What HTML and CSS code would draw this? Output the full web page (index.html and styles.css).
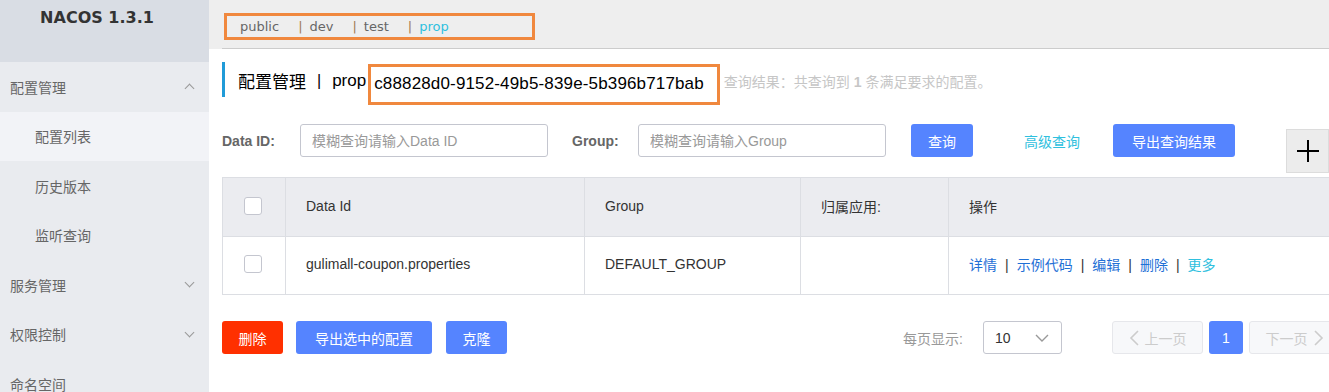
FILE: index.html
```html
<!DOCTYPE html>
<html lang="zh-CN">
<head>
    <meta charset="UTF-8">
    <title>NACOS 1.3.1</title>
    <link rel="stylesheet" href="styles.css">
</head>
<body>

    <aside class="sidebar">
        <div class="brand">NACOS 1.3.1</div>
        <div class="menu-title">配置管理 <span class="arrow up"></span></div>
        <div class="menu-item active">配置列表</div>
        <div class="menu-item">历史版本</div>
        <div class="menu-item">监听查询</div>
        <div class="menu-title">服务管理 <span class="arrow"></span></div>
        <div class="menu-title">权限控制 <span class="arrow"></span></div>
        <div class="menu-title">命名空间</div>
    </aside>

    <main class="content">
        <div class="topbar">
            <div class="topbar-inner">
                <div class="ns-list">
                    <span class="ns">public</span>
                    <span class="ns"><i>|</i>dev</span>
                    <span class="ns"><i>|</i>test</span>
                    <span class="ns current"><i>|</i>prop</span>
                </div>
            </div>
        </div>

        <div class="page">
            <div class="page-title">
                <span class="title-text">配置管理</span>
                <span class="title-sep">|</span>
                <span class="title-text">prop</span>
                <span class="ns-id">c88828d0-9152-49b5-839e-5b396b717bab</span>
                <span class="result">查询结果：共查询到 <b>1</b> 条满足要求的配置。</span>
            </div>

            <div class="search-row">
                <label class="field-label">Data ID:</label>
                <input class="text-input" placeholder="模糊查询请输入Data ID">
                <label class="field-label group-label">Group:</label>
                <input class="text-input" placeholder="模糊查询请输入Group">
                <button class="btn btn-primary search-btn">查询</button>
                <button class="btn btn-link">高级查询</button>
                <button class="btn btn-primary export-btn">导出查询结果</button>
                <button class="add-btn">
                    <svg width="24" height="24" viewBox="0 0 24 24"><path d="M12 1v22M1 12h22" stroke="#000" stroke-width="2"/></svg>
                </button>
            </div>

            <table class="config-table">
                <colgroup>
                    <col style="width: 63px">
                    <col style="width: 299px">
                    <col style="width: 216px">
                    <col style="width: 148px">
                    <col style="width: 400px">
                </colgroup>
                <thead>
                    <tr>
                        <th><span class="checkbox"></span></th>
                        <th>Data Id</th>
                        <th>Group</th>
                        <th>归属应用:</th>
                        <th>操作</th>
                    </tr>
                </thead>
                <tbody>
                    <tr>
                        <td><span class="checkbox"></span></td>
                        <td>gulimall-coupon.properties</td>
                        <td>DEFAULT_GROUP</td>
                        <td></td>
                        <td class="ops">
                            <a>详情</a><i>|</i><a>示例代码</a><i>|</i><a>编辑</a><i>|</i><a>删除</a><i>|</i><a class="more">更多</a>
                        </td>
                    </tr>
                </tbody>
            </table>

            <div class="footer-row">
                <button class="btn btn-danger">删除</button>
                <button class="btn btn-primary export-sel">导出选中的配置</button>
                <button class="btn btn-primary clone-btn">克隆</button>

                <div class="pager">
                    <span class="page-size-label">每页显示:</span>
                    <div class="select">
                        <span>10</span>
                        <svg width="14" height="8" viewBox="0 0 14 8"><path d="M1 1l6 6 6-6" fill="none" stroke="#999" stroke-width="1.4"/></svg>
                    </div>
                    <button class="page-btn disabled prev">
                        <svg width="10" height="16" viewBox="0 0 10 16"><path d="M9 1L2 8l7 7" fill="none" stroke="#ccc" stroke-width="1.6"/></svg>
                        上一页
                    </button>
                    <button class="page-btn current">1</button>
                    <button class="page-btn disabled">
                        下一页
                        <svg width="10" height="16" viewBox="0 0 10 16"><path d="M1 1l7 7-7 7" fill="none" stroke="#ccc" stroke-width="1.6"/></svg>
                    </button>
                </div>
            </div>
        </div>
    </main>

</body>
</html>
```

FILE: styles.css
```css
* {
    margin: 0;
    padding: 0;
    box-sizing: border-box;
}

body {
    font-family: "Liberation Sans", "Noto Sans CJK SC", sans-serif;
    font-size: 14px;
    color: #333;
    display: flex;
    height: 100vh;
    overflow: hidden;
    background-color: #fff;
}

/* sidebar */
.sidebar {
    width: 209px;
    flex-shrink: 0;
    background-color: #e9ebef;
}

.brand {
    height: 62px;
    background-color: #d9dde4;
    text-align: center;
    font-family: "DejaVu Sans", sans-serif;
    font-weight: bold;
    font-size: 16px;
    color: #333;
    padding-top: 8px;
    padding-right: 15px;
}

.menu-title, .menu-item {
    height: 49.5px;
    display: flex;
    align-items: center;
    color: #666;
    font-size: 14px;
}

.menu-title {
    padding-left: 10px;
    justify-content: space-between;
    padding-right: 16px;
}

.menu-item {
    padding-left: 35px;
}

.menu-item.active {
    background-color: #f2f3f7;
}

.arrow {
    width: 7px;
    height: 7px;
    border-right: 1px solid #999;
    border-bottom: 1px solid #999;
    transform: rotate(45deg);
    margin-top: -4px;
}

.arrow.up {
    transform: rotate(-135deg);
    margin-top: 4px;
}

/* main */
.content {
    flex: 1;
    min-width: 0;
    overflow: hidden;
}

.topbar {
    background-color: #eeeeee;
    height: 49px;
}

.topbar-inner {
    margin-left: 13px;
    height: 49px;
    border-bottom: 1px solid #cccccc;
    padding-top: 13px;
    padding-left: 2px;
}

.ns-list {
    display: flex;
    width: 311px;
    height: 27px;
    border: 3px solid #f0883e;
    align-items: center;
    padding-left: 13px;
    padding-bottom: 1px;
    font-family: "DejaVu Sans", "Noto Sans CJK SC", sans-serif;
    font-size: 13px;
    color: #666;
}

.ns {
    margin-right: 19px;
}

.ns i {
    font-style: normal;
    color: #a07a52;
    margin-right: 7px;
}

.ns.current {
    color: #2fc0de;
}

.page {
    padding-left: 13px;
}

.page-title {
    margin-top: 13px;
    height: 35px;
    display: flex;
    align-items: center;
    border-left: 3px solid #209bd8;
    padding-left: 13px;
    padding-top: 2px;
    font-size: 17px;
    color: #000;
    white-space: nowrap;
}

.title-sep {
    margin: 0 11px;
    font-size: 16px;
}

.ns-id {
    margin: 7px 0 0 2px;
    border: 3px solid #f0883e;
    height: 41px;
    padding: 0 13px 0 3px;
    display: flex;
    align-items: center;
    font-size: 17px;
    letter-spacing: 0.15px;
    flex-shrink: 0;
}

.result {
    margin-left: 4px;
    margin-top: 1px;
    font-size: 14px;
    color: #c6c6c6;
}

.result b {
    font-weight: bold;
}

.search-row {
    display: flex;
    align-items: center;
    margin-top: 27px;
    height: 33px;
    white-space: nowrap;
}

.search-row > * {
    flex-shrink: 0;
}

.field-label {
    font-weight: bold;
    color: #666;
    width: 78px;
}

.group-label {
    margin-left: 24px;
    width: 66px;
}

.text-input {
    width: 248px;
    height: 33px;
    border: 1px solid #c4c6cf;
    border-radius: 3px;
    padding-left: 11px;
    font-family: inherit;
    font-size: 14px;
}

.text-input::placeholder {
    color: #999;
}

.btn {
    height: 33px;
    border: none;
    border-radius: 3px;
    padding: 0;
    font-family: inherit;
    font-size: 14px;
    color: #fff;
    cursor: pointer;
    white-space: nowrap;
    flex-shrink: 0;
}

.btn-primary {
    background-color: #5584ff;
}

.btn-danger {
    background-color: #ff3000;
}

.search-btn {
    margin-left: 25px;
    width: 62px;
}

.btn-link {
    background: none;
    color: #2fc0de;
    margin: 0 32px 0 50px;
    width: 58px;
}

.export-btn {
    width: 122px;
}

.add-btn {
    margin-left: 51px;
    align-self: flex-start;
    margin-top: 5px;
    width: 43px;
    height: 44px;
    background-color: #ececec;
    border: 1px solid #dcdcdc;
    display: flex;
    align-items: center;
    justify-content: center;
}

/* table */
.config-table {
    margin-top: 20px;
    width: 1126px;
    border-collapse: collapse;
    table-layout: fixed;
}

.config-table th, .config-table td {
    border: 1px solid #dcdee3;
    text-align: left;
    padding-left: 20px;
    padding-bottom: 3px;
    font-weight: normal;
    color: #333;
    white-space: nowrap;
}

.config-table th {
    height: 59px;
    background-color: #ebecf0;
}

.config-table td {
    height: 58px;
}

.config-table th:first-child, .config-table td:first-child {
    padding-left: 21px;
}

.checkbox {
    display: block;
    width: 18px;
    height: 18px;
    border: 1px solid #c4c6cf;
    border-radius: 3px;
    background-color: #fff;
}

.ops a {
    color: #1f70d6;
}

.ops a.more {
    color: #2fc0de;
}

.ops i {
    font-style: normal;
    color: #333;
    margin: 0 8px;
}

/* footer */
.footer-row {
    display: flex;
    align-items: center;
    margin-top: 26px;
    height: 33px;
}

.footer-row .btn-danger {
    width: 61px;
}

.export-sel {
    margin-left: 13px;
    width: 136px;
}

.clone-btn {
    margin-left: 14px;
    width: 61px;
}

.pager {
    display: flex;
    align-items: center;
    margin-left: 396px;
    flex-shrink: 0;
}

.page-size-label {
    color: #999;
    width: 80px;
    flex-shrink: 0;
}

.select {
    width: 79px;
    height: 33px;
    border: 1px solid #c4c6cf;
    border-radius: 3px;
    display: flex;
    align-items: center;
    justify-content: space-between;
    padding: 0 12px 0 11px;
    color: #333;
    flex-shrink: 0;
}

.page-btn {
    height: 33px;
    border-radius: 3px;
    font-family: inherit;
    font-size: 14px;
    display: flex;
    align-items: center;
    justify-content: center;
    gap: 6px;
    margin-left: 6px;
    flex-shrink: 0;
}

.page-btn.disabled {
    width: 91px;
    background-color: #f7f8fa;
    border: 1px solid #e6e7eb;
    color: #ccc;
}

.page-btn.prev {
    margin-left: 50px;
}

.page-btn.current {
    width: 34px;
    background-color: #5584ff;
    border: none;
    color: #fff;
}
```
